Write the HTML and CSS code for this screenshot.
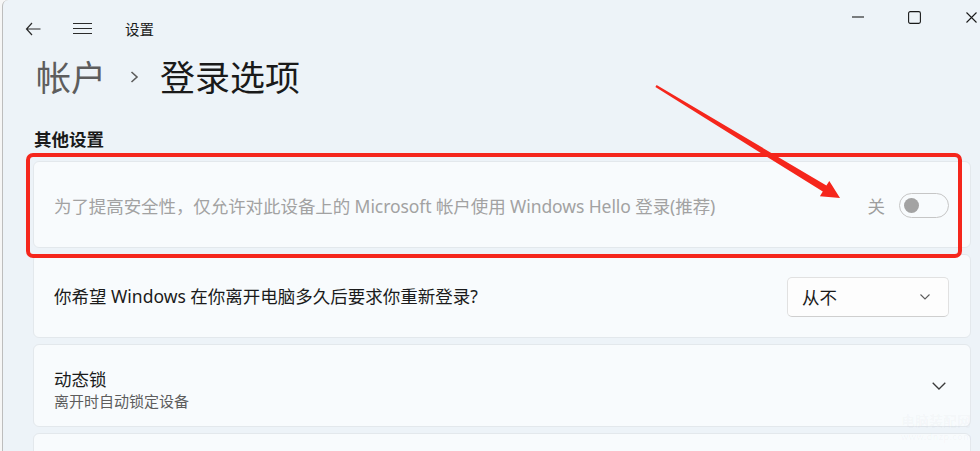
FILE: index.html
```html
<!DOCTYPE html>
<html lang="zh-CN">
<head>
<meta charset="utf-8">
<title>设置</title>
<link rel="stylesheet" href="styles.css">
</head>
<body>
<div class="app">
  <header class="titlebar">
    <div class="nav">
      <button class="nav-btn back" aria-label="返回">
        <svg width="16" height="14" viewBox="0 0 16 14"><path d="M7 1 L1.5 7 L7 13 M1.5 7 H15.5" fill="none" stroke="#2b2b2b" stroke-width="1.2"/></svg>
      </button>
      <button class="nav-btn menu" aria-label="菜单">
        <svg width="19" height="12" viewBox="0 0 19 12"><path d="M0 0.5 H19 M0 5.5 H19 M0 10.5 H19" fill="none" stroke="#2b2b2b" stroke-width="1.1"/></svg>
      </button>
      <span class="app-title">设置</span>
    </div>
    <div class="caption">
      <button class="cap-btn" aria-label="最小化">
        <svg width="12" height="2" viewBox="0 0 12 2"><path d="M0 1 H12" stroke="#1a1a1a" stroke-width="1.1"/></svg>
      </button>
      <button class="cap-btn" aria-label="最大化">
        <svg width="13" height="13" viewBox="0 0 13 13"><rect x="0.6" y="0.6" width="11.8" height="11.8" rx="1.6" fill="none" stroke="#1a1a1a" stroke-width="1.1"/></svg>
      </button>
      <button class="cap-btn" aria-label="关闭">
        <svg width="11" height="11" viewBox="0 0 11 11"><path d="M0.5 0.5 L10.5 10.5 M10.5 0.5 L0.5 10.5" stroke="#1a1a1a" stroke-width="1.1"/></svg>
      </button>
    </div>
  </header>

  <main class="content">
    <h1 class="breadcrumb">
      <span class="crumb-parent">帐户</span>
      <svg class="crumb-sep" width="9" height="12" viewBox="0 0 9 12"><path d="M1.5 1 L7 6 L1.5 11" fill="none" stroke="#5c5c5c" stroke-width="1.6"/></svg>
      <span class="crumb-current">登录选项</span>
    </h1>

    <h2 class="section-title">其他设置</h2>

    <div class="cards">
      <div class="card card-hello">
        <span class="card-text disabled">为了提高安全性，仅允许对此设备上的 Microsoft 帐户使用 Windows Hello 登录(推荐)</span>
        <div class="toggle-group">
          <span class="toggle-label">关</span>
          <span class="toggle"><span class="knob"></span></span>
        </div>
      </div>

      <div class="card card-signin">
        <span class="card-text">你希望 Windows 在你离开电脑多久后要求你重新登录?</span>
        <div class="dropdown">
          <span class="dropdown-value">从不</span>
          <svg width="10" height="6" viewBox="0 0 10 6"><path d="M0.5 0.5 L5 5 L9.5 0.5" fill="none" stroke="#5c5c5c" stroke-width="1.1"/></svg>
        </div>
      </div>

      <div class="card card-lock">
        <div class="card-stack">
          <span class="card-text">动态锁</span>
          <span class="card-sub">离开时自动锁定设备</span>
        </div>
        <svg class="expander" width="14" height="8" viewBox="0 0 14 8"><path d="M0.7 0.7 L7 7 L13.3 0.7" fill="none" stroke="#3a3a3a" stroke-width="1.3"/></svg>
      </div>

      <div class="card card-more"></div>
    </div>
  </main>

  <div class="highlight-box"></div>
  <svg class="annotation" width="980" height="451" viewBox="0 0 980 451">
    <polygon points="656.6,84.9 826.4,185.6 829.3,180.9 840,198 819.9,196.3 822.8,191.6 655.4,87.1" fill="#f5261c"/>
  </svg>
  <div class="watermark"><span class="wm-name">电脑装配网</span><span class="wm-url">www.dnzp.com</span></div>
</div>
</body>
</html>
```

FILE: styles.css
```css
* { box-sizing: border-box; }

html, body {
  margin: 0;
  padding: 0;
  height: 100%;
  overflow: hidden;
  background: #f6f6f6;
}

body {
  font-family: "Noto Sans", "Noto Sans CJK SC", sans-serif;
  color: #1b1b1b;
}

.app {
  position: relative;
  margin-left: 2px;
  height: 100%;
  overflow: hidden;
  border-left: 1px solid #bdbdbd;
  border-top-left-radius: 6px;
  background: #edf3f8;
  display: flex;
  flex-direction: column;
}

/* Title bar */
.titlebar {
  height: 54px;
  flex: none;
  display: flex;
  justify-content: space-between;
  align-items: flex-start;
}

.nav {
  display: flex;
  align-items: center;
  height: 58px;
  padding-left: 16px;
}

.nav-btn {
  border: 0;
  background: transparent;
  padding: 0;
  display: flex;
  align-items: center;
  justify-content: center;
  height: 30px;
}

.nav-btn.back { width: 28px; }
.nav-btn.menu { width: 28px; margin-left: 21px; }

.app-title {
  margin-left: 29px;
  font-size: 14.5px;
  line-height: 20px;
  color: #1a1a1a;
  font-family: "Noto Sans CJK SC", sans-serif;
}

.caption {
  display: flex;
  height: 34px;
  margin-right: -20px;
}

.cap-btn {
  width: 57px;
  height: 34px;
  border: 0;
  background: transparent;
  padding: 0;
  display: flex;
  align-items: center;
  justify-content: center;
}

/* Content */
.content {
  padding: 0 9px 0 30px;
  display: flex;
  flex-direction: column;
}

.breadcrumb {
  margin: 0 0 0 3px;
  display: flex;
  align-items: center;
  font-weight: 400;
  font-size: 35px;
  line-height: 44px;
  font-family: "Noto Sans CJK SC", sans-serif;
}

.crumb-parent { color: #5d5d5d; }
.crumb-sep { margin: 2px 21px 0 24px; }
.crumb-current { color: #1a1a1a; }

.section-title {
  margin: 29px 0 10px 1px;
  font-size: 17.5px;
  line-height: 24px;
  font-weight: 600;
  color: #1a1a1a;
  font-family: "Noto Sans CJK SC", sans-serif;
}

.cards {
  display: flex;
  flex-direction: column;
  gap: 6px;
}

.card {
  flex: none;
  display: flex;
  align-items: center;
  justify-content: space-between;
  background: #f8fbfd;
  border: 1px solid #e3e8ec;
  border-radius: 6px;
  padding: 0 21px 0 20px;
}

.card-hello { height: 87px; padding-top: 2px; }
.card-signin { height: 84px; }
.card-lock { height: 83px; }
.card-more { height: 84px; }

.card-text {
  font-size: 17.5px;
  line-height: 24px;
  color: #1b1b1b;
}

.card-text.disabled { color: #a2a2a2; letter-spacing: -0.08px; }

.toggle-group {
  display: flex;
  align-items: center;
  gap: 14px;
}

.toggle-label {
  font-size: 17.5px;
  line-height: 24px;
  color: #9e9e9e;
  font-family: "Noto Sans CJK SC", sans-serif;
}

.toggle {
  width: 50px;
  height: 25px;
  border: 1.3px solid #c6c6c6;
  border-radius: 13px;
  display: flex;
  align-items: center;
  padding-left: 4px;
}

.knob {
  width: 15px;
  height: 15px;
  border-radius: 50%;
  background: #a3a3a3;
}

.dropdown {
  width: 162px;
  height: 40px;
  margin-top: 1px;
  background: #fdfdfd;
  border: 1px solid #e1e1e1;
  border-bottom-color: #cfcfcf;
  border-radius: 5px;
  display: flex;
  align-items: center;
  justify-content: space-between;
  padding: 0 18px 0 14px;
}

.dropdown-value {
  font-size: 17.5px;
  line-height: 24px;
  color: #1a1a1a;
  font-family: "Noto Sans CJK SC", sans-serif;
}

.card-stack {
  display: flex;
  flex-direction: column;
  margin-top: 6px;
}

.card-sub {
  font-size: 15px;
  line-height: 20px;
  color: #5d5d5d;
  font-family: "Noto Sans CJK SC", sans-serif;
}

.expander { margin-right: 3px; }

/* Annotation overlays */
.highlight-box {
  position: absolute;
  left: 23px;
  top: 153px;
  width: 936px;
  height: 105px;
  border: 4px solid #f5261c;
  border-radius: 7px;
  pointer-events: none;
}

.annotation {
  position: absolute;
  left: -3px;
  top: 0;
  pointer-events: none;
}

.watermark {
  position: absolute;
  left: 898px;
  top: 412px;
  display: flex;
  flex-direction: column;
  gap: 3px;
  font-family: "Noto Sans CJK SC", sans-serif;
  color: rgba(120, 130, 140, 0.05);
  pointer-events: none;
}

.wm-name { font-size: 14px; line-height: 16px; font-weight: 700; letter-spacing: 0; }
.wm-url { font-size: 9px; line-height: 11px; letter-spacing: 0.5px; }
```
